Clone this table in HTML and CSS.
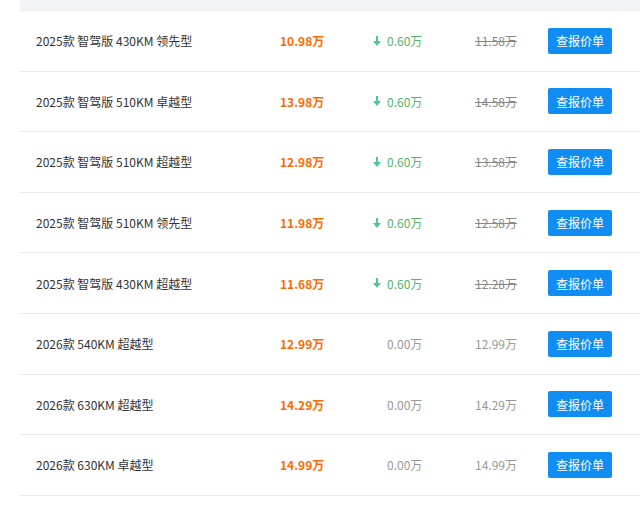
FILE: index.html
```html
<!DOCTYPE html>
<html lang="zh-CN">
<head>
  <meta charset="UTF-8">
  <title>车型报价</title>
  <link rel="stylesheet" href="styles.css">
</head>
<body>
  <div class="price-table">
    <div class="table-head"></div>

    <div class="row">
      <div class="col-name">2025款 智驾版 430KM 领先型</div>
      <div class="col-price">10.98万</div>
      <div class="col-drop"><span class="arrow"><svg viewBox="0 0 8 10" width="8" height="10"><path d="M3 0h2v5h3L4 10 0 5h3z"/></svg></span><span class="down">0.60万</span></div>
      <div class="col-old strike">11.58万</div>
      <div class="col-btn"><button class="quote-btn">查报价单</button></div>
    </div>
    <div class="row">
      <div class="col-name">2025款 智驾版 510KM 卓越型</div>
      <div class="col-price">13.98万</div>
      <div class="col-drop"><span class="arrow"><svg viewBox="0 0 8 10" width="8" height="10"><path d="M3 0h2v5h3L4 10 0 5h3z"/></svg></span><span class="down">0.60万</span></div>
      <div class="col-old strike">14.58万</div>
      <div class="col-btn"><button class="quote-btn">查报价单</button></div>
    </div>
    <div class="row">
      <div class="col-name">2025款 智驾版 510KM 超越型</div>
      <div class="col-price">12.98万</div>
      <div class="col-drop"><span class="arrow"><svg viewBox="0 0 8 10" width="8" height="10"><path d="M3 0h2v5h3L4 10 0 5h3z"/></svg></span><span class="down">0.60万</span></div>
      <div class="col-old strike">13.58万</div>
      <div class="col-btn"><button class="quote-btn">查报价单</button></div>
    </div>
    <div class="row">
      <div class="col-name">2025款 智驾版 510KM 领先型</div>
      <div class="col-price">11.98万</div>
      <div class="col-drop"><span class="arrow"><svg viewBox="0 0 8 10" width="8" height="10"><path d="M3 0h2v5h3L4 10 0 5h3z"/></svg></span><span class="down">0.60万</span></div>
      <div class="col-old strike">12.58万</div>
      <div class="col-btn"><button class="quote-btn">查报价单</button></div>
    </div>
    <div class="row">
      <div class="col-name">2025款 智驾版 430KM 超越型</div>
      <div class="col-price">11.68万</div>
      <div class="col-drop"><span class="arrow"><svg viewBox="0 0 8 10" width="8" height="10"><path d="M3 0h2v5h3L4 10 0 5h3z"/></svg></span><span class="down">0.60万</span></div>
      <div class="col-old strike">12.28万</div>
      <div class="col-btn"><button class="quote-btn">查报价单</button></div>
    </div>
    <div class="row">
      <div class="col-name">2026款 540KM 超越型</div>
      <div class="col-price">12.99万</div>
      <div class="col-drop"><span class="arrow"></span><span class="flat">0.00万</span></div>
      <div class="col-old">12.99万</div>
      <div class="col-btn"><button class="quote-btn">查报价单</button></div>
    </div>
    <div class="row">
      <div class="col-name">2026款 630KM 超越型</div>
      <div class="col-price">14.29万</div>
      <div class="col-drop"><span class="arrow"></span><span class="flat">0.00万</span></div>
      <div class="col-old">14.29万</div>
      <div class="col-btn"><button class="quote-btn">查报价单</button></div>
    </div>
    <div class="row">
      <div class="col-name">2026款 630KM 卓越型</div>
      <div class="col-price">14.99万</div>
      <div class="col-drop"><span class="arrow"></span><span class="flat">0.00万</span></div>
      <div class="col-old">14.99万</div>
      <div class="col-btn"><button class="quote-btn">查报价单</button></div>
    </div>
  </div>
</body>
</html>
```

FILE: styles.css
```css
body { margin: 0; background: #fff; font-family: "Noto Sans CJK SC", "Noto Sans", sans-serif; font-size: 12px; color: #333; }

.price-table { margin-left: 20px; }
.table-head { height: 10px; background: #f3f5f8; border-bottom: 1px solid #eceef1; }

.row { display: grid; grid-template-columns: 244px 90px 105px 73px 64px 1fr; align-items: center; height: 59.6px; padding-left: 16px; border-bottom: 1px solid #e8e8e8; }

.col-name { color: #333; }
.col-price { color: #ff6a00; font-weight: bold; }
.col-drop { display: flex; align-items: center; }
.arrow { display: inline-flex; width: 17px; padding-left: 3px; box-sizing: border-box; }
.arrow svg { fill: #4cc79a; }
.down { color: #55b36b; }
.flat { color: #999; }
.col-old { color: #999; }
.strike { text-decoration: line-through; color: #888; }

.quote-btn { width: 64px; height: 26px; padding: 0; border: none; border-radius: 2px; background: #0f8df2; color: #fff; font-family: inherit; font-size: 12px; cursor: pointer; }
```
